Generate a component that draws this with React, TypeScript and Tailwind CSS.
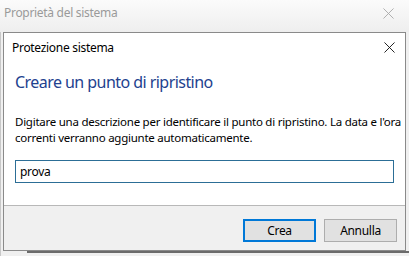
import React from "react";

function XIcon({ color, size = 12 }: { color: string; size?: number }) {
  return (
    <svg width={size} height={size} viewBox="0 0 12 12" fill="none">
      <path d="M0.5 0.5 L11.5 11.5 M11.5 0.5 L0.5 11.5" stroke={color} strokeWidth="1" />
    </svg>
  );
}

export default function App() {
  return (
    <div
      className="relative w-[409px] h-[256px] overflow-hidden bg-[#f0f0f0]"
      style={{ fontFamily: '"Noto Sans", "Open Sans", sans-serif' }}
    >
      {/* background window title bar */}
      <div className="flex h-[32px] items-start justify-between bg-gradient-to-b from-[#fbfbfb] to-[#eeeeee] pl-[4px] pr-[15px] pt-[5px]">
        <span className="text-[12px] leading-[16px] tracking-[-0.3px] text-[#9a9a9a]">Proprietà del sistema</span>
        <div className="mt-[3px]">
          <XIcon color="#a8a8a8" size={11} />
        </div>
      </div>
      <div className="absolute left-0 top-[32px] bottom-0 w-[3px] bg-[#f0f0f0] border-l border-[#c8c8c8]" />
      <div className="absolute left-[27px] right-0 top-[251px] h-[2px] bg-[#6b6b6b]" />

      {/* dialog */}
      <div className="absolute left-[3px] top-[32px] w-[403px] h-[219px] border border-[#8a8a8a] bg-white flex flex-col">
        <div className="flex h-[28px] items-center justify-between pl-[8px] pr-[10px]">
          <span className="text-[12px] leading-[16px] tracking-[-0.3px] text-black pt-[2px]">Protezione sistema</span>
          <XIcon color="#111" size={11} />
        </div>
        <div className="flex flex-1 flex-col px-[11px]">
          <div className="mt-[10px] text-[16px] leading-[22px] tracking-[-0.55px] text-[#22418e]">
            Creare un punto di ripristino
          </div>
          <div className="mt-[21px] flex flex-col whitespace-nowrap text-[11.5px] leading-[16px] tracking-[-0.25px] text-black">
            <span>Digitare una descrizione per identificare il punto di ripristino. La data e l'ora</span>
            <span>correnti verranno aggiunte automaticamente.</span>
          </div>
          <div className="mt-[14px] flex h-[23px] items-center border border-[#2c6e96] pl-[4px] text-[12px] tracking-[-0.3px] text-black">
            prova
          </div>
        </div>
        <div className="flex h-[45px] items-start justify-end gap-[8px] border-t border-[#b8b8b8] bg-[#f0f0f0] pr-[8px] pt-[13px]">
          <button className="flex h-[23px] w-[73px] items-center justify-center border-2 border-[#0078d7] bg-[#e1e1e1] text-[12px] tracking-[-0.3px] text-black">
            Crea
          </button>
          <button className="flex h-[23px] w-[73px] items-center justify-center border border-[#adadad] bg-[#e1e1e1] text-[12px] tracking-[-0.3px] text-black">
            Annulla
          </button>
        </div>
      </div>
    </div>
  );
}
